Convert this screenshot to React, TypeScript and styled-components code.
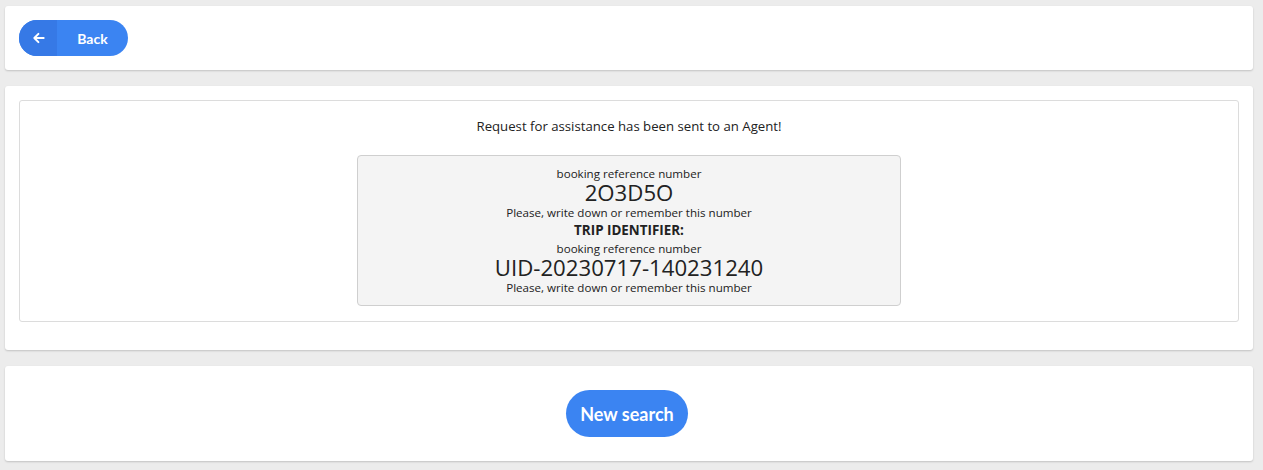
import React from "react";
import styled, { createGlobalStyle } from "styled-components";

const Global = createGlobalStyle`
  html, body { margin: 0; padding: 0; background: #ececec; }
  body { font-family: "Open Sans", "DejaVu Sans", sans-serif; color: #222; }
`;

const Page = styled.div`
  display: flex;
  flex-direction: column;
  gap: 16px;
  padding: 6px 10px 8px 5px;
`;

const Card = styled.div<{ $center?: boolean; $pad?: string }>`
  background: #fff;
  border-radius: 3px;
  box-shadow: 0 1px 2px rgba(0, 0, 0, 0.18);
  padding: ${(p) => p.$pad ?? "14px"};
  display: flex;
  justify-content: ${(p) => (p.$center ? "center" : "flex-start")};
`;

const BackButton = styled.button`
  display: flex;
  align-items: stretch;
  height: 36px;
  width: 109px;
  padding: 0;
  border: none;
  border-radius: 18px;
  overflow: hidden;
  background: #3b84f2;
  color: #fff;
  font-family: Lato, sans-serif;
  font-weight: 700;
  font-size: 14px;
  cursor: pointer;
`;

const IconPart = styled.span`
  width: 36px;
  display: flex;
  align-items: center;
  justify-content: center;
  background: #3679e6;
  padding-left: 2px;
`;

const LabelPart = styled.span`
  flex: 1;
  display: flex;
  align-items: center;
  justify-content: center;
`;

const Inner = styled.div`
  flex: 1;
  border: 1px solid #dcdcdc;
  border-radius: 3px;
  display: flex;
  flex-direction: column;
  align-items: center;
  padding: 16px 0 15px;
`;

const Message = styled.div`
  font-size: 13.2px;
  line-height: 18px;
  margin-bottom: 20px;
`;

const InfoBox = styled.div`
  width: 542px;
  background: #f4f4f4;
  border: 1px solid #cfcfcf;
  border-radius: 4px;
  display: flex;
  flex-direction: column;
  align-items: center;
  padding: 9px 0 9px;
`;

const Small = styled.div<{ $bold?: boolean }>`
  font-size: ${(p) => (p.$bold ? "13.4px" : "11.6px")};
  font-weight: ${(p) => (p.$bold ? 700 : 400)};
  line-height: ${(p) => (p.$bold ? "19px" : "17px")};
`;

const Big = styled.div`
  font-size: 22.2px;
  line-height: 22px;
`;

const NewSearch = styled.button`
  height: 47px;
  width: 122px;
  border: none;
  border-radius: 24px;
  background: #3b84f2;
  color: #fff;
  font-family: Lato, sans-serif;
  font-weight: 700;
  font-size: 18px;
  cursor: pointer;
  margin: 10px 4px 10px 0;
`;

const Arrow = () => (
  <svg width="14" height="14" viewBox="0 0 24 24" fill="none" stroke="#fff" strokeWidth="3.4" strokeLinecap="round" strokeLinejoin="round">
    <path d="M20 12H5" />
    <path d="M11 5l-7 7 7 7" />
  </svg>
);

export default function App() {
  return (
    <>
      <Global />
      <Page>
        <Card>
          <BackButton>
            <IconPart>
              <Arrow />
            </IconPart>
            <LabelPart>Back</LabelPart>
          </BackButton>
        </Card>
        <Card $pad="14px 14px 28px">
          <Inner>
            <Message>Request for assistance has been sent to an Agent!</Message>
            <InfoBox>
              <Small>booking reference number</Small>
              <Big>2O3D5O</Big>
              <Small>Please, write down or remember this number</Small>
              <Small $bold>TRIP IDENTIFIER:</Small>
              <Small>booking reference number</Small>
              <Big>UID-20230717-140231240</Big>
              <Small>Please, write down or remember this number</Small>
            </InfoBox>
          </Inner>
        </Card>
        <Card $center>
          <NewSearch>New search</NewSearch>
        </Card>
      </Page>
    </>
  );
}
